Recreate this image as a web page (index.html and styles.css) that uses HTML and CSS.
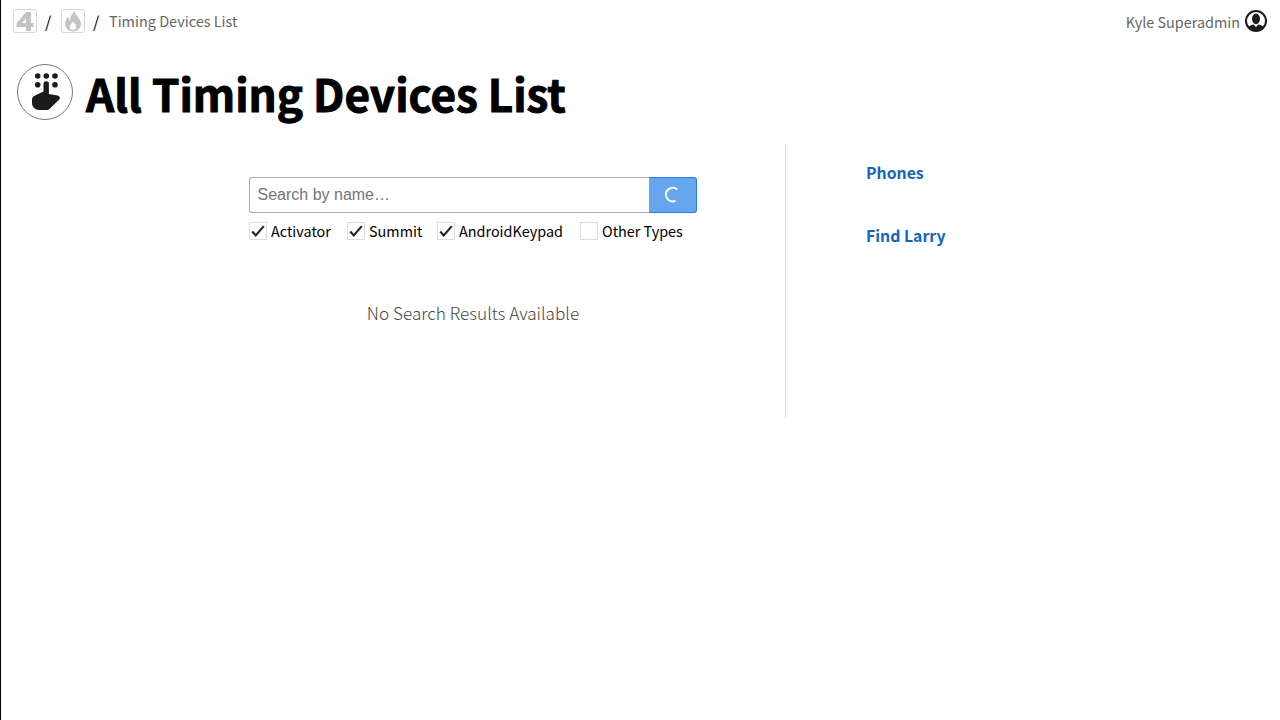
FILE: index.html
```html
<!DOCTYPE html>
<html lang="en">
<head>
  <meta charset="UTF-8">
  <title>All Timing Devices List</title>
  <link rel="stylesheet" href="styles.css">
</head>
<body>
  <header class="topbar">
    <nav class="crumbs">
      <a class="crumb-icon" href="#">
        <svg viewBox="0 0 22 22" width="22" height="22"><path fill="#c4c4c4" fill-rule="evenodd" d="M12 2h5v11h2.500v4H17v4h-5v-4H2.500v-3.500L12 2zM12 13V8.500L8 13z"/></svg>
      </a>
      <span class="sep">/</span>
      <a class="crumb-icon" href="#">
        <svg viewBox="0 0 22 22" width="22" height="22"><path fill="#c4c4c4" fill-rule="evenodd" d="M12.500 1c.5 4.500 6.500 7 6.500 13a8 7.500 0 0 1-16 0c0-3 1.500-5.500 3.500-7.500 0 2 .5 3.500 1.500 4C8 7.500 10 4 12.500 1zM11 11.500c-1.500 2-3.200 3.300-3.200 5.200a3.200 3.200 0 0 0 6.400 0c0-1.900-1.700-3.200-3.200-5.200z"/></svg>
      </a>
      <span class="sep">/</span>
      <span class="crumb-text">Timing Devices List</span>
    </nav>
    <div class="user">
      <span>Kyle Superadmin</span>
      <svg viewBox="0 0 24 24" width="24" height="24">
        <defs><clipPath id="user-clip"><circle cx="12" cy="12" r="10"/></clipPath></defs>
        <g clip-path="url(#user-clip)" fill="#1c1c1c">
          <ellipse cx="12" cy="9.800" rx="4" ry="5.400"/>
          <path d="M3 24v-4c1-3 4-3.800 6.500-4.500L12 18l2.500-2.500c2.500.7 5.500 1.500 6.500 4.500v4z"/>
        </g>
        <circle cx="12" cy="12" r="10" fill="none" stroke="#1c1c1c" stroke-width="2"/>
      </svg>
    </div>
  </header>

  <div class="title-row">
    <div class="title-icon">
      <svg viewBox="0 0 56 56" width="56" height="56">
        <g fill="#1c1c1c">
          <circle cx="20.700" cy="12" r="2.800"/><circle cx="29.300" cy="12" r="2.800"/><circle cx="38" cy="12" r="2.800"/>
          <circle cx="20.700" cy="20.700" r="2.800"/><circle cx="38" cy="20.700" r="2.800"/>
          <path d="M26.500 20a2.700 2.700 0 0 1 5.400 0v10l8.800 1.500c2 .6 2.800 2.300 1.800 3.800L33 44.500c-1 1-2 1.500-3.500 1.500H22c-4 0-7-3-7-7v-3.500c0-2.500 1.500-3.500 3.500-4.300l8-3.700z"/>
        </g>
      </svg>
    </div>
    <h1>All Timing Devices List</h1>
  </div>

  <div class="content">
    <main class="main-col">
      <form class="search">
        <input type="text" placeholder="Search by name…">
        <button type="button" aria-label="Search">
          <svg viewBox="0 0 18 18" width="18" height="18"><path fill="none" stroke="#fff" stroke-width="2" d="M14.300 3.500A6.800 6.800 0 1 0 12.500 14.800"/></svg>
        </button>
      </form>
      <div class="filters">
        <label class="filter"><span class="box"><svg viewBox="0 0 18 18" width="16" height="16"><path fill="none" stroke="#222" stroke-width="2.400" d="M2.500 9.500l4 4.500L15.500 3.500"/></svg></span>Activator</label>
        <label class="filter"><span class="box"><svg viewBox="0 0 18 18" width="16" height="16"><path fill="none" stroke="#222" stroke-width="2.400" d="M2.500 9.500l4 4.500L15.500 3.500"/></svg></span>Summit</label>
        <label class="filter"><span class="box"><svg viewBox="0 0 18 18" width="16" height="16"><path fill="none" stroke="#222" stroke-width="2.400" d="M2.500 9.500l4 4.500L15.500 3.500"/></svg></span>AndroidKeypad</label>
        <label class="filter"><span class="box"></span>Other Types</label>
      </div>
      <p class="empty">No Search Results Available</p>
    </main>
    <aside class="side-col">
      <a href="#">Phones</a>
      <a href="#">Find Larry</a>
    </aside>
  </div>
</body>
</html>
```
FILE: styles.css
```css
html, body {
  height: 100%;
}
body {
  margin: 0;
  border-left: 1px solid #000;
  box-sizing: border-box;
  font-family: "Noto Sans CJK JP", "Noto Sans", sans-serif;
  color: #000;
  background-color: #fff;
}
a {
  text-decoration: none;
}
.topbar {
  display: flex;
  justify-content: space-between;
  padding: 9px 12px 0 12px;
  height: 35px;
  box-sizing: border-box;
}
.crumbs {
  display: flex;
  align-items: center;
  height: 24px;
}
.crumb-icon {
  display: flex;
  align-items: center;
  justify-content: center;
  width: 22px;
  height: 22px;
  border: 1px solid #d5d5d5;
  border-radius: 3px;
}
.sep {
  width: 24px;
  padding-left: 8px;
  box-sizing: border-box;
  font-size: 16px;
}
.crumb-text {
  font-size: 14.450px;
  color: #666;
  position: relative;
  top: -1px;
}
.user {
  display: flex;
  align-items: center;
  gap: 4px;
  height: 24px;
  font-size: 14.400px;
  color: #666;
}
.title-row {
  display: flex;
  align-items: flex-start;
  gap: 13px;
  padding: 29px 0 0 16px;
}
.title-icon {
  width: 56px;
  height: 56px;
  border: 1px solid #777;
  border-radius: 50%;
  box-sizing: border-box;
  overflow: hidden;
}
.title-icon svg {
  display: block;
  margin: -1px;
}
h1 {
  margin: 0;
  font-size: 44px;
  line-height: 58px;
  font-weight: 700;
  -webkit-text-stroke: 1px #000;
}
.content {
  display: flex;
  margin-top: 22px;
}
.main-col {
  width: 785px;
  height: 274px;
  box-sizing: border-box;
  border-right: 1px solid #ddd;
  padding: 33px 0 0 248px;
}
.search {
  display: flex;
  width: 448px;
  height: 36px;
}
.search input {
  flex: 1;
  min-width: 0;
  padding: 0 7.500px;
  border: 1px solid #aaa;
  border-right: none;
  border-radius: 3px 0 0 3px;
  font-family: "Liberation Sans", sans-serif;
  font-size: 16px;
  outline: none;
}
.search input::placeholder {
  color: #757575;
}
.search button {
  display: flex;
  align-items: center;
  justify-content: center;
  width: 48px;
  padding: 0 2px 0 0;
  border: 1px solid #2b7de0;
  border-left: none;
  border-radius: 0 3px 3px 0;
  background-color: #66a6ee;
}
.filters {
  display: grid;
  grid-template-columns: 82px 74px 127px auto;
  column-gap: 16px;
  margin-top: 9px;
}
.filter {
  display: flex;
  align-items: center;
  gap: 4px;
  height: 18px;
  font-size: 14.400px;
  line-height: 16px;
}
.box {
  width: 18px;
  height: 18px;
  flex: none;
  box-sizing: border-box;
  border: 1px solid #ddd;
}
.box svg {
  display: block;
}
.empty {
  margin: 60px 0 0 0;
  width: 448px;
  text-align: center;
  font-size: 17.200px;
  font-weight: 300;
  color: #444;
}
.side-col {
  display: flex;
  flex-direction: column;
  gap: 36px;
  padding: 15px 0 0 80px;
}
.side-col a {
  font-size: 15.800px;
  line-height: 27px;
  font-weight: 700;
  color: #1565c0;
}
```
